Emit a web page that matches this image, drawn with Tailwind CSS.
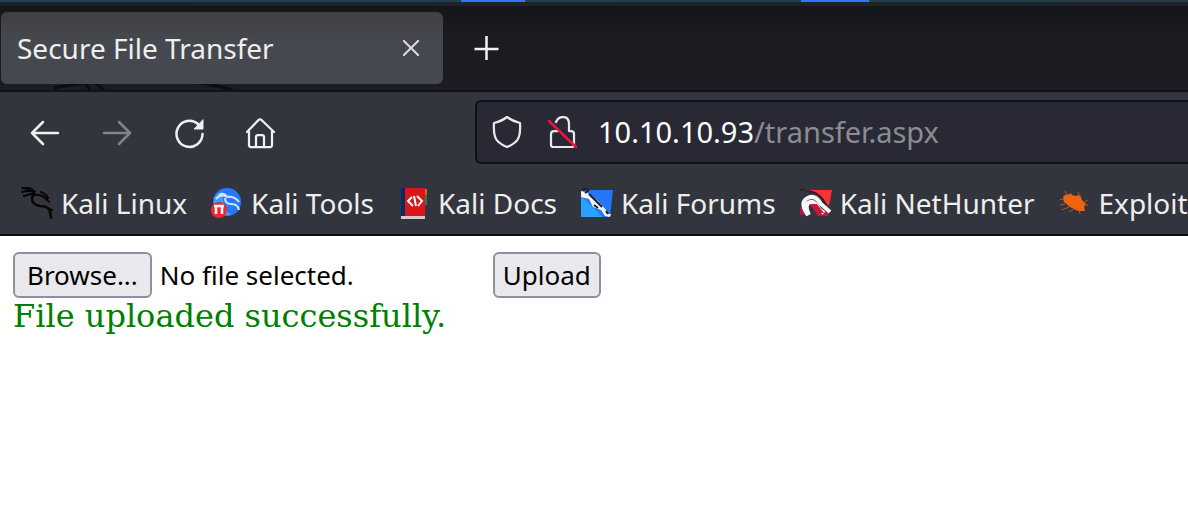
<!DOCTYPE html>
<html lang="en">
<head>
    <meta charset="UTF-8">
    <meta name="viewport" content="width=device-width, initial-scale=1.0">
    <title>Secure File Transfer</title>
    <script src="https://cdn.jsdelivr.net/npm/@tailwindcss/browser@4"></script>
</head>
<body class="bg-white min-h-screen overflow-x-hidden font-['Noto_Sans',sans-serif]">
    <header class="bg-[#33353e] border-b-2 border-[#0c0d12] text-[#eeeeec]">
        <!-- Desktop panel edge -->
        <div class="h-[2px] bg-linear-to-r from-[#233f5c] to-[#263f49] flex">
            <span class="ml-[461px] w-16 bg-[#2777ff]"></span>
            <span class="ml-[276px] w-[68px] bg-[#2777ff]"></span>
        </div>

        <!-- Tabs -->
        <div class="relative overflow-hidden h-[90px] pl-px pt-[6px] bg-linear-to-b from-[#14161a] to-[#1b1c21] to-40% border-t-4 border-t-[#1f2226] border-b-2 border-b-[#111216] flex items-start">
            <svg class="absolute left-12 bottom-0 w-48 h-2" viewBox="0 0 192 8" fill="none" stroke="#0c0d10" stroke-width="3" aria-hidden="true">
                <path d="M6 6Q20 3 36 1M36 0l6 8M46 0l10 8M142 0Q164 2 184 8"/>
            </svg>
            <div class="relative w-[442px] h-[72px] pl-4 pr-5 rounded-md bg-linear-to-b from-[#3f4043] to-[#46484f] to-40% flex items-center justify-between">
                <span class="text-[28px] leading-9">Secure File Transfer</span>
                <button type="button" aria-label="Close tab" class="size-6 flex items-center justify-center">
                    <svg class="size-4" viewBox="0 0 16 16" fill="none" stroke="#dcdcda" stroke-width="2"><path d="M0 0l16 16M16 0L0 16"/></svg>
                </button>
            </div>
            <button type="button" aria-label="New tab" class="ml-6 w-10 h-[72px] flex items-center justify-center">
                <svg class="size-[26px]" viewBox="0 0 26 26" fill="none" stroke="#f2f2f2" stroke-width="2.500"><path d="M12.500 1v24M.5 14h24"/></svg>
            </button>
        </div>

        <!-- Navigation -->
        <nav class="h-20 pt-2 flex items-start">
            <div class="h-16 pl-[30px] pt-[2px] flex items-center gap-[42px]">
                <button type="button" aria-label="Back">
                    <svg class="w-[30px] h-8" viewBox="0 0 30 32" fill="none" stroke="#f0f0ee" stroke-width="2.500" stroke-linecap="round" stroke-linejoin="round"><path d="M28 16H2M13 5L2 16l11 11"/></svg>
                </button>
                <button type="button" aria-label="Forward" disabled>
                    <svg class="w-[30px] h-8" viewBox="0 0 30 32" fill="none" stroke="#828387" stroke-width="2.500" stroke-linecap="round" stroke-linejoin="round"><path d="M2 16h26M17 5l11 11-11 11"/></svg>
                </button>
                <button type="button" aria-label="Reload">
                    <svg class="w-[30px] h-8" viewBox="0 0 30 32" fill="none" stroke="#f0f0ee" stroke-width="2.500" stroke-linecap="round"><path d="M28.500 17A13 13 0 1 1 24 7"/><path d="M29 3v9h-8.500z" fill="#f0f0ee" stroke-width="1"/></svg>
                </button>
                <button type="button" aria-label="Home">
                    <svg class="w-[30px] h-8" viewBox="0 0 30 32" fill="none" stroke="#f0f0ee" stroke-width="2.250" stroke-linecap="round" stroke-linejoin="round"><path d="M1 15L12.500 3Q14 1.500 15.500 3L28 15M3 14v14q0 2 2 2h19q2 0 2-2V14M10 30V20q0-2 2-2h4q2 0 2 2v10"/></svg>
                </button>
            </div>
            <div class="ml-[199px] -mr-2 flex-1 h-16 pl-[15px] rounded-md border-2 border-[#0f1015] bg-[#282934] flex items-center">
                <svg class="w-[30px] h-8 shrink-0" viewBox="0 0 30 32" fill="none" stroke="#e8e8e8" stroke-width="2.250" stroke-linejoin="round" aria-hidden="true"><path d="M15 1q5 4 13 6 1 15-4.500 19-4 3.500-8.500 5-4.500-1.500-8.500-5Q1 22 2 7q8-2 13-6z"/></svg>
                <svg class="ml-[26px] w-[30px] h-8 shrink-0" viewBox="0 0 30 32" fill="none" stroke="#e8e8e8" stroke-width="2.250" stroke-linecap="round" stroke-linejoin="round" aria-hidden="true"><path d="M8 6q2-5 7-5 6 0 6 7v7h2q3 0 3 3v11q0 2-2 2H5q-2 0-2-2V18q0-3 3-3h4"/><path d="M1 5l27 26" stroke="#ef1340" stroke-width="2.500"/></svg>
                <a href="#" class="ml-5 text-[29px] leading-9 text-white">10.10.10.93<span class="text-[#8b8c93]">/transfer.aspx</span></a>
            </div>
        </nav>

        <!-- Bookmarks -->
        <div class="h-[62px] pl-[21px] pt-[13px] flex items-start gap-6 overflow-hidden whitespace-nowrap text-[28px] leading-9">
            <a href="#" class="flex shrink-0 items-center gap-2">
                <svg class="size-8" viewBox="0 0 32 32" fill="none" stroke="#070708" stroke-linecap="round" stroke-linejoin="round" aria-hidden="true"><path d="M1 1h8l5 4M1 5q6-2 12 0M3 9q5-2 9-2M5 3h6" stroke-width="2"/><path d="M13 6l-2 5q0 7 8 8 8 0 10 5l1 7" stroke-width="2.500"/><path d="M13 8q8-2 15 7M20 5q5 2 7 6M26 21l5 2" stroke-width="2"/></svg>
                Kali Linux
            </a>
            <a href="#" class="flex shrink-0 items-center gap-2">
                <svg class="size-8" viewBox="0 0 32 32" fill="none" aria-hidden="true"><circle cx="16" cy="15" r="14" fill="#2878fb"/><path d="M3 11q4-6 9-6Q10 20 20 28 7 30 3 19z" fill="#36a3ff"/><path d="M5 12q5-6 11-2 8-1 12 5M14 11q0 6 6 6 7 0 8 6M8 8q5-3 8 2" stroke="#cfe4ff" stroke-width="2"/><circle cx="8" cy="23" r="8" fill="#ef292c"/><path d="M3 19h10M5 20v7M11 20v7" stroke="#fff" stroke-width="2.500"/></svg>
                Kali Tools
            </a>
            <a href="#" class="flex shrink-0 items-center gap-2">
                <svg class="size-8" viewBox="0 0 32 32" fill="none" aria-hidden="true"><path d="M3 1h4v28H3z" fill="#082b62"/><path d="M27 2h2v6h-2z" fill="#ef5b16"/><path d="M27 8h2v10h-2z" fill="#257a60"/><path d="M7 1h20v28H7z" fill="#db1518"/><path d="M3 29h24v3H3z" fill="#d8c9cd"/><path d="M14 10l-4 4 5 5M19 9l5 5-4 5M16 9l2 10" stroke="#fff" stroke-width="2"/></svg>
                Kali Docs
            </a>
            <a href="#" class="flex shrink-0 items-center gap-2">
                <svg class="size-8" viewBox="0 0 32 32" fill="none" aria-hidden="true"><path d="M5 3h27l-3 27H0V8z" fill="#2577f6"/><path d="M0 9l22 21H0z" fill="#2aa0ff"/><path d="M0 4l5 1 12 9 8 9 1 4 4 0-1 3-5-1-4-6-8-3-4-8L0 10z" fill="#f5f5f5"/><path d="M1 2l5 0M4 6l4-3M8 7l13 13M13 18l4 3M25 24l2 3" stroke="#1d2025" stroke-width="2"/></svg>
                Kali Forums
            </a>
            <a href="#" class="flex shrink-0 items-center gap-2">
                <svg class="size-8" viewBox="0 0 32 32" fill="none" aria-hidden="true"><path d="M9 3h23l-3 16z" fill="#fc3039"/><path d="M0 3l5-1M7 4q13 1 19 14" stroke="#24252a" stroke-width="2"/><path d="M0 21h5v7H0z" fill="#a5194b"/><path d="M9 16q5-2 9 3l10 7v3H18l-6-9z" fill="#c51840"/><path d="M8 28Q0 17 6 12q8-6 15 5l9 8M9 28q-4-8-1-12 6-4 11 6l5 4" stroke="#f7f7f7" stroke-width="4"/><path d="M11 17l6 0 7 9h-5z" fill="#c51840"/></svg>
                Kali NetHunter
            </a>
            <a href="#" class="flex shrink-0 items-center gap-2">
                <svg class="size-8" viewBox="0 0 32 32" fill="none" stroke="#b9541e" aria-hidden="true"><path d="M6 8l5-1 5 2 5-1 2 5 4 4-2 3 1 4-7 0-8-4-6-5-1-5z" fill="#ef6410" stroke="none"/><path d="M8 8L6 4M14 9l-3-3M21 10l-2-5M5 13l-4-1M6 17l-5 1M10 20l-7 3M15 22l-5 3M20 23l1 4M24 16l5-3M25 18h4" stroke-width="1"/></svg>
                Exploit
            </a>
        </div>
    </header>

    <main class="px-[13px] pt-4">
        <form class="flex items-center leading-9 text-[26px] text-black" onsubmit="return false">
            <input type="file" id="upload-file" class="hidden" aria-label="File">
            <button type="button" id="browse-btn" class="h-[46px] px-3 border-2 border-[#8f8f9d] rounded-md bg-[#e9e9ed]">Browse...</button>
            <label for="upload-file" id="file-name" class="ml-2 w-[333px] truncate">No file selected.</label>
            <button type="submit" class="h-[46px] px-2 border-2 border-[#8f8f9d] rounded-md bg-[#e9e9ed]">Upload</button>
        </form>
        <p class="font-['DejaVu_Serif',serif] text-[32px] leading-9 text-[#008000]">File uploaded successfully.</p>
    </main>

    <script>
        const fileInput = document.getElementById('upload-file');

        document.getElementById('browse-btn').addEventListener('click', function () {
            fileInput.click();
        });

        fileInput.addEventListener('change', function () {
            const file = fileInput.files[0];
            document.getElementById('file-name').innerText = file ? file.name : 'No file selected.';
        });
    </script>
</body>
</html>
